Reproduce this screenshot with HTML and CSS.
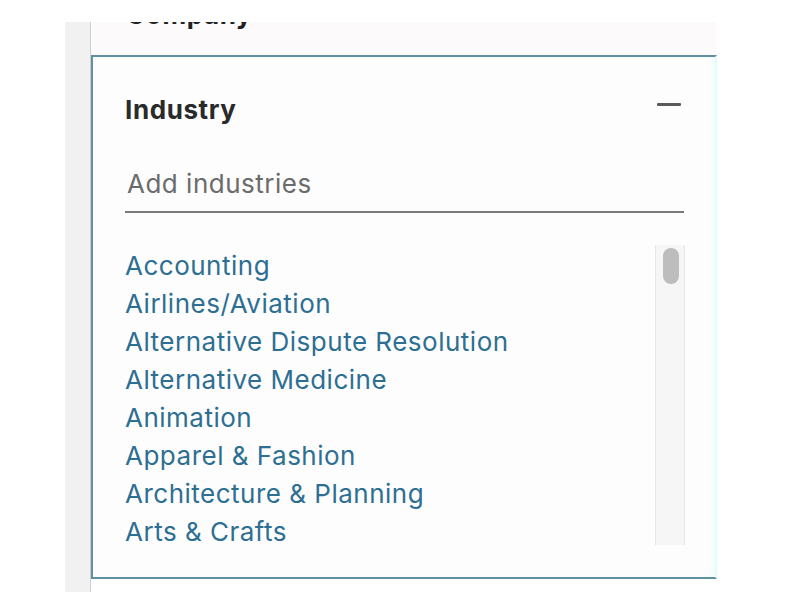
FILE: index.html
```html
<!DOCTYPE html>
<html lang="en">

<head>
    <meta charset="UTF-8">
    <meta name="viewport" content="width=device-width, initial-scale=1.0">
    <title>Industry filter</title>
    <link rel="stylesheet" href="styles.css">
</head>

<body>

    <div class="layout">
        <!-- left rail -->
        <div class="rail"></div>

        <div class="filters">
            <!-- previous section, scrolled mostly out of view -->
            <div class="section-prev">
                <h3>Company</h3>
            </div>

            <!-- industry facet -->
            <div class="facet">
                <div class="facet-header">
                    <h3>Industry</h3>
                    <button class="collapse-btn" aria-label="Collapse"></button>
                </div>

                <div class="facet-input">
                    <input type="text" placeholder="Add industries">
                </div>

                <div class="facet-list-wrap">
                    <ul class="facet-list">
                        <li>Accounting</li>
                        <li>Airlines/Aviation</li>
                        <li>Alternative Dispute Resolution</li>
                        <li>Alternative Medicine</li>
                        <li>Animation</li>
                        <li>Apparel &amp; Fashion</li>
                        <li>Architecture &amp; Planning</li>
                        <li>Arts &amp; Crafts</li>
                        <li>Automotive</li>
                        <li>Aviation &amp; Aerospace</li>
                        <li>Banking</li>
                        <li>Biotechnology</li>
                        <li>Broadcast Media</li>
                        <li>Building Materials</li>
                        <li>Business Supplies &amp; Equipment</li>
                        <li>Capital Markets</li>
                        <li>Chemicals</li>
                        <li>Civic &amp; Social Organization</li>
                        <li>Civil Engineering</li>
                        <li>Commercial Real Estate</li>
                    </ul>
                    <!-- scrollbar -->
                    <div class="scroll-track">
                        <div class="scroll-thumb"></div>
                    </div>
                </div>
            </div>
        </div>
    </div>

</body>

</html>
```

FILE: styles.css
```css
body {
    margin: 0;
    padding: 0;
    background-color: #fff;
    font-family: Inter, "Noto Sans", sans-serif;
}

.layout {
    display: flex;
    width: 652px;
    height: 570px;
    margin: 22px 0 0 65px;
}

.rail {
    width: 25px;
    background-color: #f2f1f1;
    border-right: 1px solid #cfcfcf;
}

.filters {
    flex: 1;
    display: flex;
    flex-direction: column;
}

.section-prev {
    height: 33px;
    overflow: hidden;
    background-color: #fcfafa;
}

.section-prev h3 {
    margin: -23px 0 0 35px;
    font-size: 26px;
    line-height: 32px;
    font-weight: 700;
    letter-spacing: 0.6px;
    color: #222;
}

.facet {
    border: 2px solid #5f909f;
    border-right-color: #e4fafb;
    background-color: #fdfdfd;
    box-shadow: inset -3px 0 4px #f0fdfd;
    padding: 37px 30px 32px 32px;
}

.facet-header {
    display: flex;
    justify-content: space-between;
    align-items: flex-start;
}

.facet-header h3 {
    margin: 0;
    font-size: 26px;
    line-height: 32px;
    font-weight: 700;
    letter-spacing: 0.6px;
    color: #2a2a2a;
}

/* minus icon */
.collapse-btn {
    width: 24px;
    height: 3px;
    margin: 9px 4px 0 0;
    padding: 0;
    border: none;
    border-radius: 1px;
    background-color: #5a5a5a;
}

.facet-input {
    margin-top: 39px;
    border-bottom: 2px solid #7a7a7a;
    padding-bottom: 8px;
    margin-right: 1px;
}

.facet-input input {
    width: 100%;
    box-sizing: border-box;
    border: none;
    outline: none;
    background: transparent;
    padding: 0 0 0 2px;
    font-family: inherit;
    font-size: 26px;
    letter-spacing: 0.5px;
    line-height: 38px;
    height: 38px;
    color: #333;
}

.facet-input input::placeholder {
    color: #6b6b6b;
}

.facet-list-wrap {
    display: flex;
    margin-top: 32px;
    height: 300px;
}

.facet-list {
    flex: 1;
    list-style: none;
    margin: 0;
    padding: 2px 0 0 0;
    overflow: hidden;
}

.facet-list li {
    font-size: 26px;
    letter-spacing: 0.5px;
    line-height: 38px;
    color: #2d6f93;
    white-space: nowrap;
    cursor: pointer;
}

.scroll-track {
    width: 28px;
    background-color: #f6f6f6;
    border-left: 1px solid #e6e6e6;
    border-right: 1px solid #e6e6e6;
}

.scroll-thumb {
    width: 16px;
    height: 36px;
    margin: 3px 0 0 7px;
    border-radius: 8px;
    background-color: #bdbdbd;
}
```
